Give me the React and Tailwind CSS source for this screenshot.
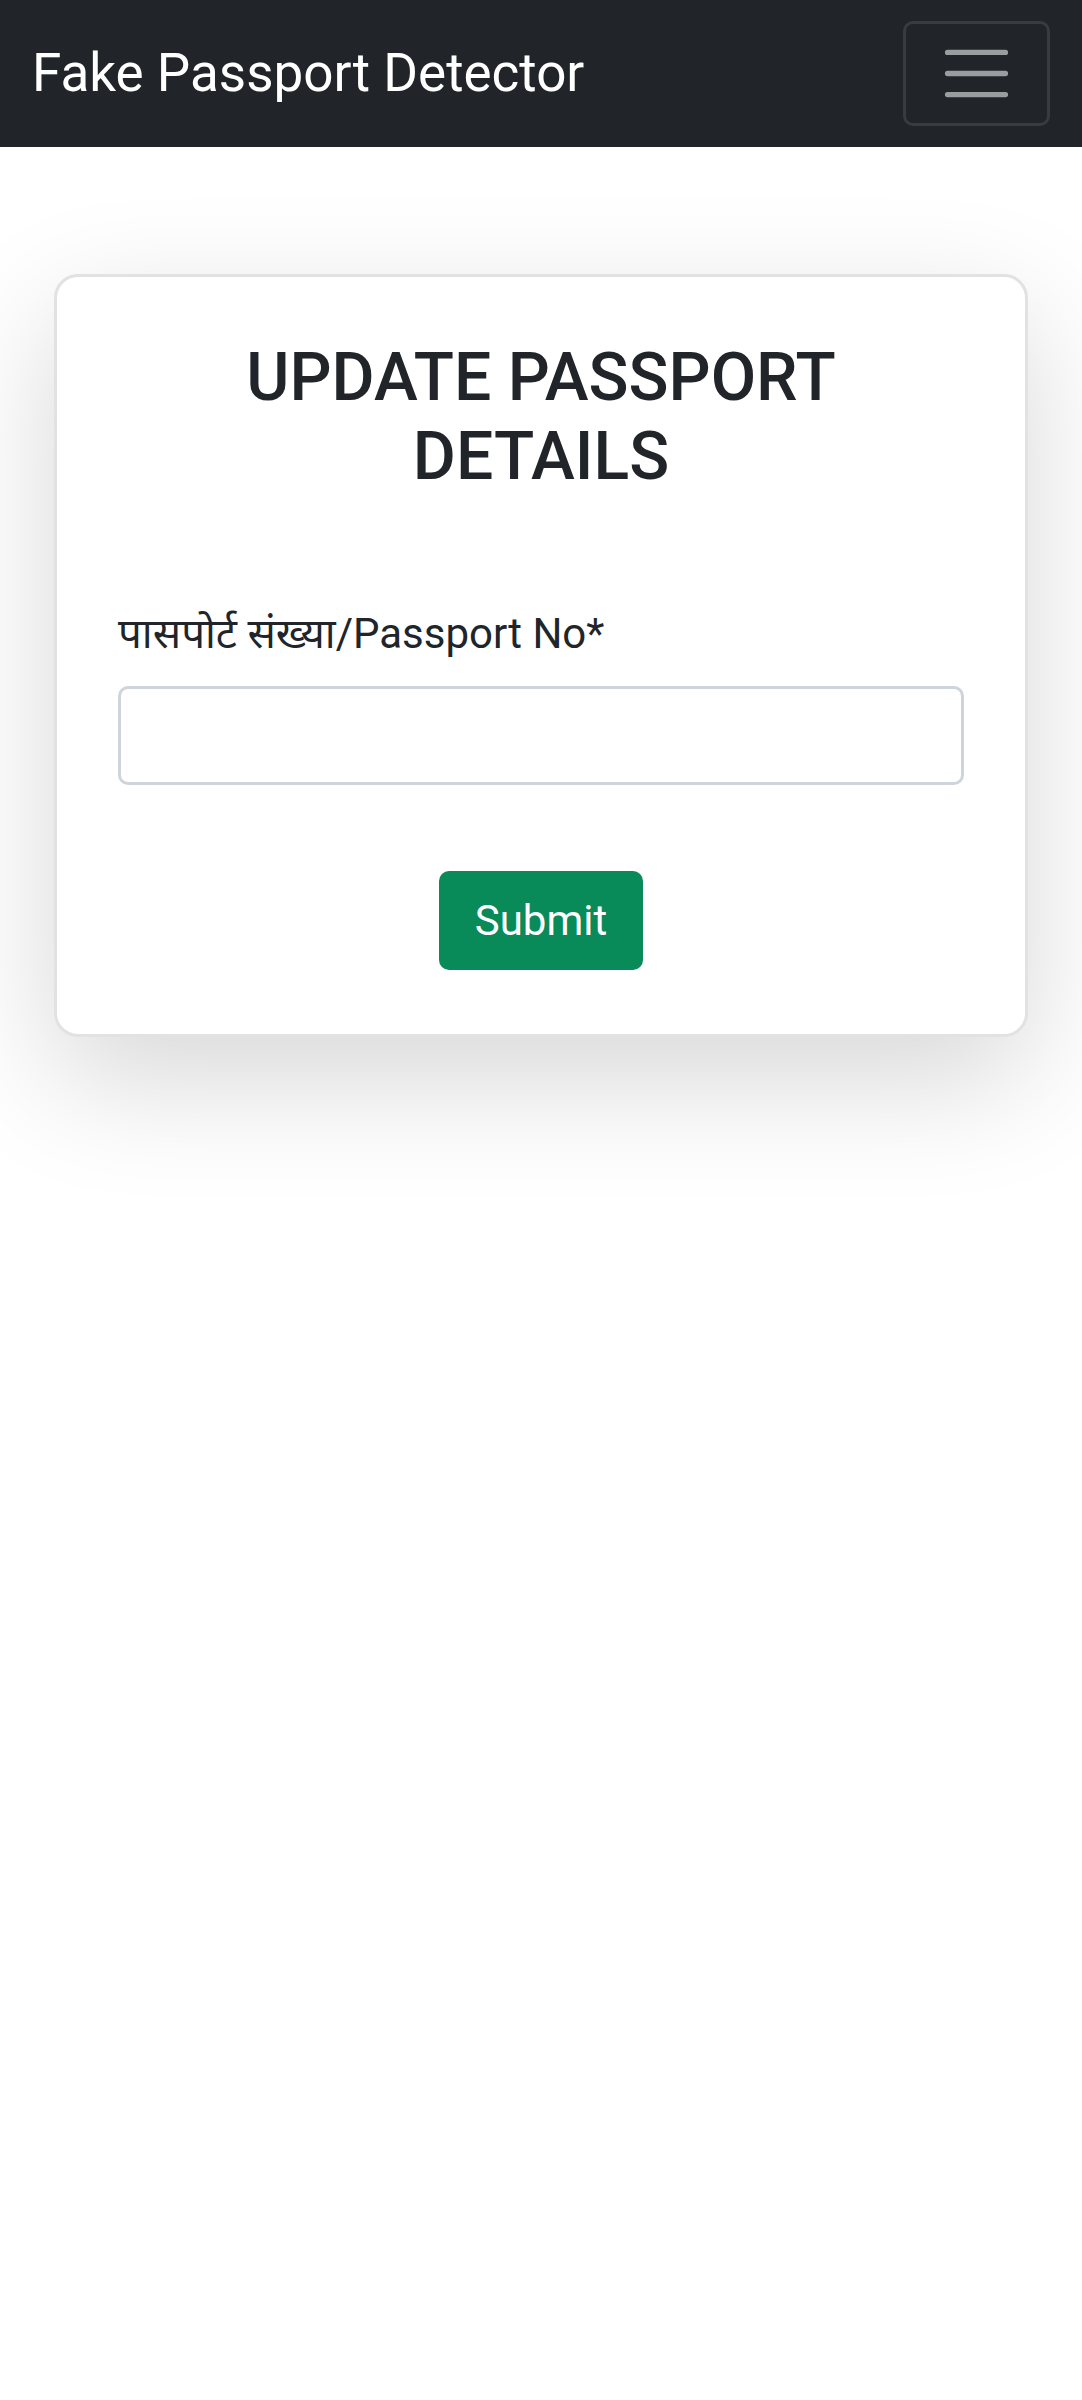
export default function App() {
  return (
    <div className="min-h-[2400px] bg-white font-['Roboto','Noto_Sans',sans-serif] text-[#212529]">
      <nav className="h-[147px] bg-[#212529] px-[32px] flex items-center justify-between">
        <span className="text-white text-[53px] leading-none">Fake Passport Detector</span>
        <button className="w-[147px] h-[105px] border-[3px] border-[#383b3f] rounded-[10px] flex items-center justify-center">
          <svg width="79" height="79" viewBox="0 0 30 30">
            <path d="M4 7h22M4 15h22M4 23h22" stroke="rgba(255,255,255,0.55)" strokeWidth="2" strokeLinecap="round" strokeMiterlimit="10" />
          </svg>
        </button>
      </nav>
      <div className="px-[54px] pt-[127px]">
        <div className="border-[3px] border-[#e2e2e2] rounded-[24px] shadow-[0_42px_126px_rgba(0,0,0,0.16)] px-[61px] pt-[61px] pb-[64px] bg-white">
          <h2 className="text-center text-[66px] font-medium leading-[79px] mb-[106px]">
            UPDATE PASSPORT<br />DETAILS
          </h2>
          <label className="block text-[42px] leading-[63px] mb-[21px] font-['Roboto','Noto_Sans_Devanagari','Lohit_Devanagari','FreeSans','Noto_Sans',sans-serif]">
            पासपोर्ट संख्या/Passport No*
          </label>
          <input type="text" className="block w-full h-[99px] rounded-[10px] border-[3px] border-[#ced4da] bg-white outline-none" />
          <div className="flex justify-center mt-[86px]">
            <button className="w-[204px] h-[99px] rounded-[10px] bg-[#088a59] text-white text-[42px] leading-none">
              Submit
            </button>
          </div>
        </div>
      </div>
    </div>
  );
}
